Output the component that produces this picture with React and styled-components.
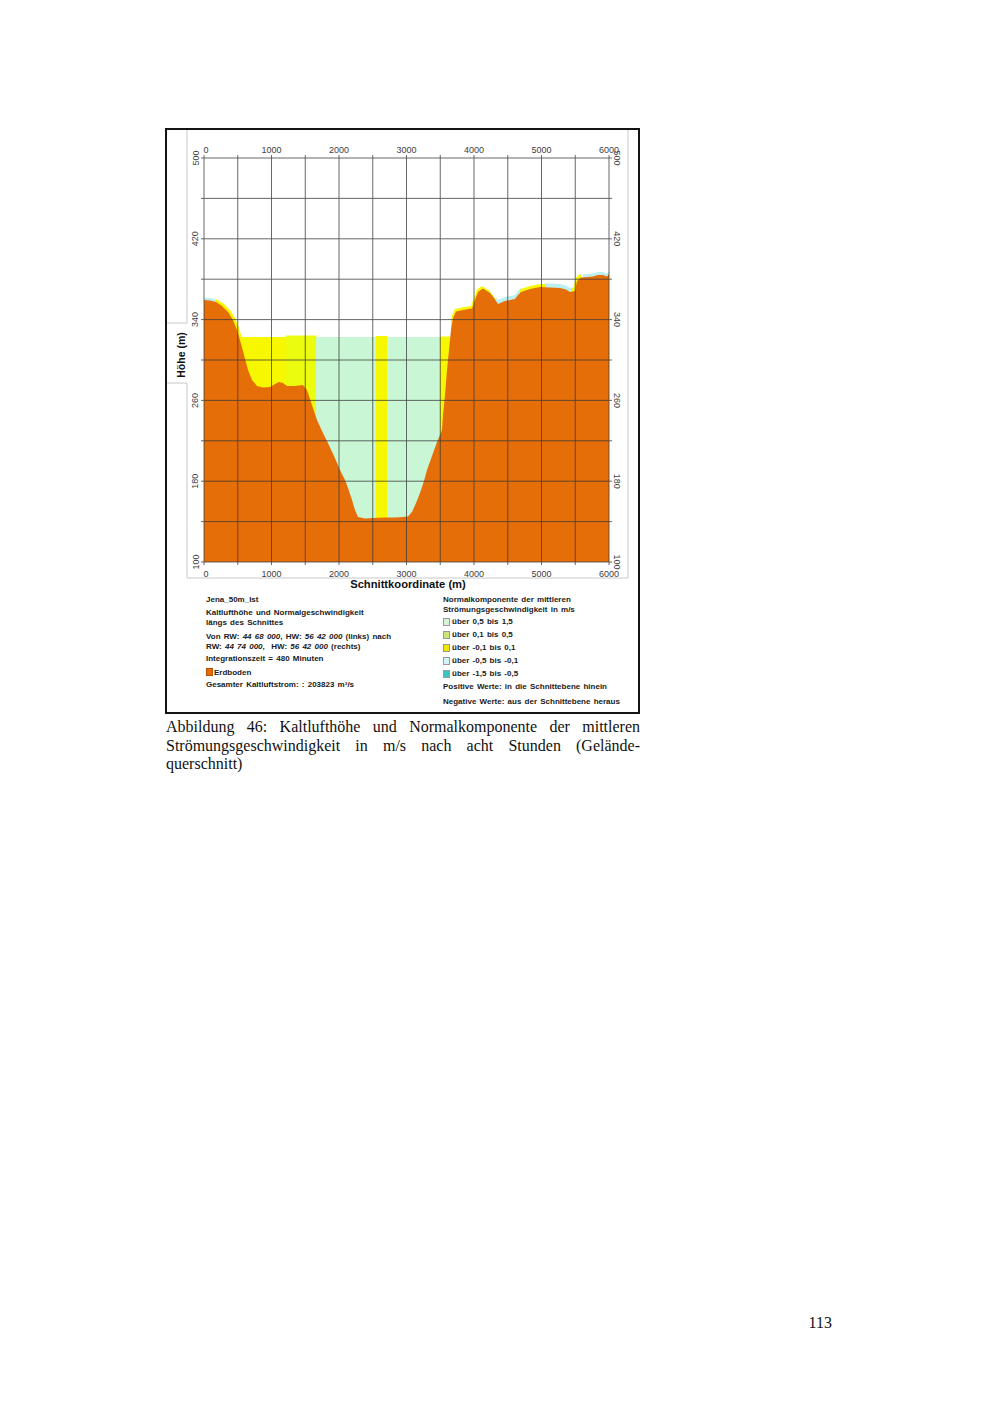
import React from 'react';
import styled, { createGlobalStyle } from 'styled-components';

const GlobalStyle = createGlobalStyle`
  html, body {
    margin: 0;
    padding: 0;
    background: #ffffff;
  }
`;

const Page = styled.div`
  width: 1000px;
  min-height: 1413px;
  display: flex;
  flex-direction: column;
  background: #fff;
  box-sizing: border-box;
  padding-top: 128px;
`;

const Figure = styled.div`
  margin-left: 165px;
  width: 475px;
  height: 586px;
  box-sizing: border-box;
  border: 2px solid #141414;
  display: flex;
  flex-direction: column;
`;

const ChartSvg = styled.svg`
  display: block;
  width: 471px;
  height: 460px;
  flex: none;
`;

const Legend = styled.div`
  display: grid;
  grid-template-columns: 237px 1fr;
  padding: 5px 0 0 39px;
  font-family: 'Liberation Sans', Arial, sans-serif;
  font-weight: bold;
  font-size: 8px;
  color: #1a1a1a;
  word-spacing: 1px;
`;

const LegendColumn = styled.div`
  display: flex;
  flex-direction: column;
  gap: ${p => p.$gap ?? 3}px;
`;

const LegendPara = styled.div`
  line-height: ${p => p.$lh || 10}px;
  margin-top: ${p => p.$mt || 0}px;
  white-space: nowrap;
`;

const SwatchList = styled.div`
  display: flex;
  flex-direction: column;
  margin-top: 1px;
`;

const SwatchRow = styled.div`
  display: flex;
  align-items: center;
  height: ${p => p.$h || 13}px;
  gap: ${p => p.$gap ?? 2}px;
  white-space: nowrap;
`;

const Swatch = styled.span`
  display: inline-block;
  flex: none;
  width: ${p => p.$w || 7}px;
  height: 8px;
  box-sizing: border-box;
  background: ${p => p.$color};
  border: 1px solid ${p => p.$border || '#9a9a9a'};
`;

const Caption = styled.p`
  margin: 4px 0 0 166px;
  width: 474px;
  font-family: 'Liberation Serif', 'Times New Roman', serif;
  font-size: 16px;
  line-height: 18.5px;
  text-align: justify;
  color: #111;
`;

const PageNumber = styled.div`
  margin-top: auto;
  padding: 0 168px 81px 0;
  text-align: right;
  font-family: 'Liberation Serif', 'Times New Roman', serif;
  font-size: 16px;
  line-height: 18.5px;
  color: #111;
`;

// plot area in page pixels
const PX0 = 204;
const PX1 = 609;
const PY0 = 158;
const PY1 = 562;

const ORANGE = '#e56e08';
const YELLOW = '#f6f700';
const YGREEN = '#ebfc0e';
const PALE = '#c9f7d6';
const CYAN = '#bdeff0';

const terrain = [
  [204, 300], [210, 300.5], [216, 302], [222, 306], [228, 312], [233, 320],
  [237, 330], [240, 340], [244, 355], [248, 370], [252, 380], [257, 386],
  [263, 387.5], [270, 387], [275, 384], [279, 382], [283, 383], [287, 386],
  [295, 386], [303, 385], [307, 390], [312, 405], [317, 420], [322, 431],
  [327, 441], [334, 456], [340, 470], [345, 480], [348, 488], [352, 500],
  [355, 510], [358, 517], [365, 518.5], [373, 518], [385, 517.5], [395, 517.5],
  [403, 517], [408, 516.5], [412, 512], [416, 503], [420, 493], [424, 481],
  [427, 470], [432, 456], [437, 442], [442, 430], [443, 415], [445, 395],
  [447, 370], [449, 350], [451, 330], [453, 318], [456, 311.5], [463, 310],
  [472, 308.5], [475, 300], [478, 292], [483, 288.5], [490, 293], [494, 298],
  [498, 304], [505, 301], [515, 299], [518, 295], [521, 292], [530, 289],
  [540, 287], [550, 287.5], [560, 288], [566, 289.5], [570, 292], [575, 291],
  [577, 281], [581, 277.5], [588, 277], [593, 276.5], [598, 275], [603, 275],
  [607, 276.5], [609, 274],
];

const yAt = x => {
  for (let i = 1; i < terrain.length; i++) {
    const [x0, y0] = terrain[i - 1];
    const [x1, y1] = terrain[i];
    if (x <= x1) return y0 + ((x - x0) / (x1 - x0)) * (y1 - y0);
  }
  return terrain[terrain.length - 1][1];
};

const terrainPoints = [...terrain, [PX1, PY1], [PX0, PY1]]
  .map(p => p.join(','))
  .join(' ');

const thinLayer = (x0, x1, dx, dy) => {
  const pts = [];
  for (let x = x0; x <= x1; x += 1) pts.push([x + dx, yAt(x) + dy]);
  pts.push([x1 + dx, PY1], [x0 + dx, PY1]);
  return pts.map(p => p.join(',')).join(' ');
};

const pools = [
  { x0: 237, x1: 286, top: 337, color: YELLOW },
  { x0: 286, x1: 316, top: 335.5, color: YGREEN },
  { x0: 316, x1: 376, top: 337, color: PALE },
  { x0: 376, x1: 387, top: 336, color: YELLOW },
  { x0: 387, x1: 440, top: 337, color: PALE },
  { x0: 440, x1: 450, top: 336.5, color: YELLOW },
];

const thinLayers = [
  { x0: 204, x1: 218, dx: 0, dy: -2.5, color: CYAN },
  { x0: 214, x1: 241, dx: 2, dy: -2, color: YELLOW },
  { x0: 452, x1: 500, dx: -1, dy: -2.5, color: YELLOW },
  { x0: 496, x1: 522, dx: 0, dy: -4, color: CYAN },
  { x0: 520, x1: 548, dx: 0, dy: -3, color: YELLOW },
  { x0: 545, x1: 575, dx: 0, dy: -4, color: CYAN },
  { x0: 573, x1: 583, dx: -1.5, dy: -3, color: YELLOW },
  { x0: 583, x1: 609, dx: 0, dy: -3, color: CYAN },
];

const xStep = (PX1 - PX0) / 12;
const yStep = (PY1 - PY0) / 10;

const Chart = () => (
  <ChartSvg viewBox="167 130 471 460">
    <defs>
      <clipPath id="plot">
        <rect x={PX0} y={PY0} width={PX1 - PX0} height={PY1 - PY0} />
      </clipPath>
    </defs>

    {/* light panel frame */}
    <g stroke="#c9c9c9" strokeWidth="1" fill="none">
      <polyline points="187,130 187,323 167,323" />
      <polyline points="167,383 187,383 187,578 628,578 628,130" />
    </g>

    <g clipPath="url(#plot)">
      {pools.map(p => (
        <rect key={p.x0} x={p.x0} y={p.top} width={p.x1 - p.x0 + 0.5} height={PY1 - p.top} fill={p.color} />
      ))}
      {thinLayers.map(l => (
        <polygon key={l.x0} points={thinLayer(l.x0, l.x1, l.dx, l.dy)} fill={l.color} />
      ))}
      <polygon points={terrainPoints} fill={ORANGE} />
    </g>

    {/* grid */}
    <g stroke="#3a3a3a" strokeWidth="0.9" opacity="0.85">
      {Array.from({ length: 13 }, (_, i) => (
        <line key={`v${i}`} x1={PX0 + i * xStep} x2={PX0 + i * xStep} y1={PY0 - 3} y2={PY1 + 3} />
      ))}
      {Array.from({ length: 11 }, (_, j) => (
        <line key={`h${j}`} x1={PX0 - 3} x2={PX1 + 3} y1={PY0 + j * yStep} y2={PY0 + j * yStep} />
      ))}
    </g>

    <g fontFamily="'Liberation Sans', Arial, sans-serif" fontSize="9" fill="#404040" textAnchor="middle">
      {[0, 1000, 2000, 3000, 4000, 5000, 6000].map((v, i) => (
        <React.Fragment key={v}>
          <text x={PX0 + i * 2 * xStep + (i === 0 ? 2 : 0)} y="153">{v}</text>
          <text x={PX0 + i * 2 * xStep + (i === 0 ? 2 : 0)} y="576.5">{v}</text>
        </React.Fragment>
      ))}
      {[500, 420, 340, 260, 180, 100].map((v, k) => {
        const y = PY0 + k * 2 * yStep;
        return (
          <React.Fragment key={v}>
            <text x="195.5" y={y} dominantBaseline="central" transform={`rotate(-90 195.5 ${y})`}>{v}</text>
            <text x="617" y={y} dominantBaseline="central" transform={`rotate(90 617 ${y})`}>{v}</text>
          </React.Fragment>
        );
      })}
    </g>

    <text
      x="181" y="355" textAnchor="middle" dominantBaseline="central"
      transform="rotate(-90 181 355)"
      fontFamily="'Liberation Sans', Arial, sans-serif" fontWeight="bold" fontSize="10.5" fill="#111"
    >
      Höhe (m)
    </text>
    <text
      x="408" y="587.5" textAnchor="middle"
      fontFamily="'Liberation Sans', Arial, sans-serif" fontWeight="bold" fontSize="11.2" fill="#111"
    >
      Schnittkoordinate (m)
    </text>
  </ChartSvg>
);

const legendItems = [
  { label: 'über 0,5 bis 1,5', color: '#d8f2d8' },
  { label: 'über 0,1 bis 0,5', color: '#cae47a' },
  { label: 'über -0,1 bis 0,1', color: '#f2e600' },
  { label: 'über -0,5 bis -0,1', color: '#d3f3f7' },
  { label: 'über -1,5 bis -0,5', color: '#3cc6c0' },
];

const App = () => (
  <>
    <GlobalStyle />
    <Page>
      <Figure>
        <Chart />
        <Legend>
          <LegendColumn>
            <LegendPara>Jena_50m_Ist</LegendPara>
            <LegendPara>
              Kaltlufthöhe und Normalgeschwindigkeit<br />
              längs des Schnittes
            </LegendPara>
            <LegendPara $lh={9.5} $mt={1}>
              Von RW: <i>44 68 000</i>, HW: <i>56 42 000</i> (links) nach<br />
              RW: <i>44 74 000</i>,&nbsp; HW: <i>56 42 000</i> (rechts)
            </LegendPara>
            <LegendPara>Integrationszeit = 480 Minuten</LegendPara>
            <SwatchRow $gap={1} $h={10}>
              <Swatch $color="#e46c0a" $border="#b85200" $w={7} />
              <span>Erdboden</span>
            </SwatchRow>
            <LegendPara>Gesamter Kaltluftstrom: : 203823 m³/s</LegendPara>
          </LegendColumn>
          <LegendColumn $gap={0}>
            <LegendPara $lh={9.5}>
              Normalkomponente der mittleren<br />
              Strömungsgeschwindigkeit in m/s
            </LegendPara>
            <SwatchList>
              {legendItems.map(item => (
                <SwatchRow key={item.label}>
                  <Swatch $color={item.color} />
                  <span>{item.label}</span>
                </SwatchRow>
              ))}
            </SwatchList>
            <LegendPara $mt={1.5}>Positive Werte: in die Schnittebene hinein</LegendPara>
            <LegendPara $mt={5}>Negative Werte: aus der Schnittebene heraus</LegendPara>
          </LegendColumn>
        </Legend>
      </Figure>
      <Caption>
        Abbildung 46: Kaltlufthöhe und Normalkomponente der mittleren
        Strömungsgeschwindigkeit in m/s nach acht Stunden (Gelände-querschnitt)
      </Caption>
      <PageNumber>113</PageNumber>
    </Page>
  </>
);

export default App;
